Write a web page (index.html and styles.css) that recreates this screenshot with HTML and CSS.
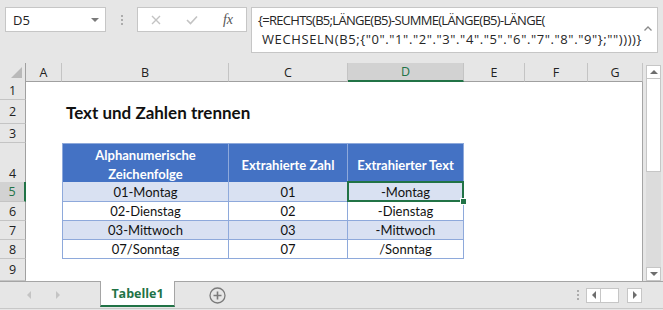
FILE: index.html
```html
<!DOCTYPE html>
<html>
<head>
    <title>Text und Zahlen trennen</title>
    <link rel="stylesheet" href="styles.css">
</head>
<body>
    <div class="ribbon">
        <div class="namebox"><span>D5</span><span class="drop"></span></div>
        <div class="grip"><i></i><i></i><i></i></div>
        <div class="fxbox">
            <span class="fxbtn">
                <svg width="10" height="10" viewBox="0 0 10 10"><path d="M1 1L9 9M9 1L1 9" stroke="#c3c3c3" stroke-width="1.4" fill="none"/></svg>
            </span>
            <span class="fxbtn">
                <svg width="12" height="10" viewBox="0 0 12 10"><path d="M1 5L4.5 8.5L11 1.5" stroke="#c3c3c3" stroke-width="1.6" fill="none"/></svg>
            </span>
            <span class="fxbtn fx">fx</span>
        </div>
        <div class="formula">
            <div class="ftext">
                <div class="line1">{=RECHTS(B5;LÄNGE(B5)-SUMME(LÄNGE(B5)-LÄNGE(</div>
                <div class="line2">WECHSELN(B5;{"0"."1"."2"."3"."4"."5"."6"."7"."8"."9"};""))))}</div>
            </div>
            <span class="collapse">
                <svg width="8" height="5" viewBox="0 0 8 5"><path d="M0.5 4.5L4 1L7.5 4.5" stroke="#8a8a8a" stroke-width="1.3" fill="none"/></svg>
            </span>
        </div>
    </div>

    <div class="main">
        <div class="sheet">
            <div class="row heads">
                <div class="corner"><span class="tri"></span></div>
                <div class="ch">A</div>
                <div class="ch">B</div>
                <div class="ch">C</div>
                <div class="ch active">D</div>
                <div class="ch">E</div>
                <div class="ch">F</div>
                <div class="ch">G</div>
            </div>
            <div class="row r1">
                <div class="rh">1</div><div></div><div></div><div></div><div></div><div></div><div></div><div></div>
            </div>
            <div class="row r2">
                <div class="rh">2</div><div></div><div class="title">Text und Zahlen trennen</div><div></div><div></div><div></div><div></div><div></div>
            </div>
            <div class="row r3">
                <div class="rh">3</div><div></div><div></div><div></div><div></div><div></div><div></div><div></div>
            </div>
            <div class="row r4">
                <div class="rh">4</div><div></div>
                <div class="t th first">Alphanumerische<br>Zeichenfolge</div>
                <div class="t th">Extrahierte Zahl</div>
                <div class="t th">Extrahierter Text</div>
                <div></div><div></div><div></div>
            </div>
            <div class="row r5">
                <div class="rh active">5</div><div></div>
                <div class="t band first">01-Montag</div>
                <div class="t band">01</div>
                <div class="t band sel">-Montag</div>
                <div></div><div></div><div></div>
            </div>
            <div class="row r6">
                <div class="rh">6</div><div></div>
                <div class="t first">02-Dienstag</div>
                <div class="t">02</div>
                <div class="t">-Dienstag</div>
                <div></div><div></div><div></div>
            </div>
            <div class="row r7">
                <div class="rh">7</div><div></div>
                <div class="t band first">03-Mittwoch</div>
                <div class="t band">03</div>
                <div class="t band">-Mittwoch</div>
                <div></div><div></div><div></div>
            </div>
            <div class="row r8">
                <div class="rh">8</div><div></div>
                <div class="t first">07/Sonntag</div>
                <div class="t">07</div>
                <div class="t">/Sonntag</div>
                <div></div><div></div><div></div>
            </div>
            <div class="row r9">
                <div class="rh">9</div><div></div><div></div><div></div><div></div><div></div><div></div><div></div>
            </div>
        </div>
        <div class="vscroll">
            <div class="sbtn"><span class="up"></span></div>
            <div class="vthumb"></div>
            <div class="vtrack"></div>
            <div class="sbtn"><span class="down"></span></div>
        </div>
    </div>

    <div class="tabbar">
        <div class="tabnav"><span class="left"></span><span class="right"></span></div>
        <div class="tab">Tabelle1</div>
        <div class="addsheet">
            <svg width="17" height="17" viewBox="0 0 17 17"><circle cx="8.5" cy="8.5" r="7.5" stroke="#7b7b7b" stroke-width="1.3" fill="none"/><path d="M8.5 4.5V12.5M4.5 8.5H12.5" stroke="#7b7b7b" stroke-width="1.6"/></svg>
        </div>
        <div class="spacer"></div>
        <div class="grip hgrip"><i></i><i></i><i></i></div>
        <div class="hscroll">
            <div class="sbtn"><span class="left dark"></span></div>
            <div class="hthumb"></div>
            <div class="htrack"></div>
            <div class="sbtn"><span class="right dark"></span></div>
        </div>
    </div>
</body>
</html>
```

FILE: styles.css
```css
body {
    margin: 0;
    width: 663px;
    height: 310px;
    overflow: hidden;
    background-color: #e6e6e6;
    font-family: 'Open Sans', sans-serif;
    color: #222;
}

/* formula bar */
.ribbon {
    display: flex;
    align-items: flex-start;
    height: 63px;
    padding: 7px 0 0 5px;
    box-sizing: border-box;
}
.namebox {
    width: 101px;
    height: 25px;
    box-sizing: border-box;
    border: 1px solid #c6c6c6;
    background-color: #fff;
    display: flex;
    align-items: center;
    justify-content: space-between;
    padding: 0 6px 0 7px;
    font-size: 13px;
}
.drop {
    border-left: 4px solid transparent;
    border-right: 4px solid transparent;
    border-top: 4px solid #7a7a7a;
}
.grip {
    width: 31px;
    display: flex;
    flex-direction: column;
    align-items: center;
    gap: 2px;
    padding-top: 8px;
}
.grip i {
    width: 2px;
    height: 2px;
    background-color: #acacac;
}
.fxbox {
    width: 110px;
    height: 25px;
    box-sizing: border-box;
    border: 1px solid #c6c6c6;
    background-color: #fff;
    display: flex;
    align-items: center;
    margin-right: 4px;
}
.fxbtn {
    width: 36px;
    display: flex;
    justify-content: center;
}
.fx {
    font-family: 'Liberation Serif', serif;
    font-style: italic;
    font-size: 14px;
    color: #555;
}
.formula {
    width: 407px;
    height: 46px;
    box-sizing: border-box;
    border: 1px solid #c6c6c6;
    background-color: #fff;
    display: flex;
    padding: 3px 5px 0 6px;
    font-size: 13px;
    line-height: 19px;
    color: #262626;
}
.ftext {
    flex: 1;
    white-space: nowrap;
}
.line1 {
    letter-spacing: -0.7px;
}
.line2 {
    padding-left: 4px;
    letter-spacing: 0.6px;
}
.collapse {
    padding-top: 6px;
}

/* sheet */
.main {
    display: flex;
}
.sheet {
    width: 643px;
}
.row {
    display: grid;
    grid-template-columns: 26px 36px 167px 119px 116px 61px 63px 1fr;
    background-color: #fff;
    border-right: 1px solid #a5a5a5;
    font-family: 'Lato', sans-serif;
    font-size: 13px;
}
.heads {
    height: 18px;
    background-color: #e6e6e6;
    border-right: none;
    font-family: 'Open Sans', sans-serif;
}
.r1, .r3, .r6, .r7, .r8 { height: 19px; }
.r2 { height: 24px; }
.r4 { height: 39px; }
.r5 { height: 20px; }
.r9 { height: 22px; }

.corner, .ch {
    border-right: 1px solid #c4c4c4;
    border-bottom: 1px solid #a0a0a0;
    box-sizing: border-box;
}
.corner {
    display: flex;
    justify-content: flex-end;
    align-items: flex-end;
    padding: 0 3px 3px 0;
    border-right-color: #a0a0a0;
}
.tri {
    border-left: 11px solid transparent;
    border-bottom: 11px solid #b9b9b9;
}
.ch {
    display: flex;
    align-items: center;
    justify-content: center;
    font-size: 12.5px;
}
.ch.active {
    background-color: #d2d2d2;
    border-bottom: 2px solid #217346;
    color: #217346;
}
.rh {
    background-color: #e6e6e6;
    border-right: 1px solid #a0a0a0;
    border-bottom: 1px solid #c4c4c4;
    box-sizing: border-box;
    display: flex;
    align-items: center;
    justify-content: center;
    font-family: 'Open Sans', sans-serif;
    font-size: 12.5px;
}
.r4 .rh {
    align-items: flex-end;
    padding-bottom: 2px;
}
.rh.active {
    background-color: #d2d2d2;
    border-right: 2px solid #217346;
    color: #217346;
}

.title {
    white-space: nowrap;
    font-weight: 700;
    font-size: 17px;
    padding: 2px 0 0 4px;
    color: #111;
}

/* table */
.t {
    box-sizing: border-box;
    border-right: 1px solid #8ea9db;
    border-bottom: 1px solid #8ea9db;
    display: flex;
    align-items: center;
    justify-content: center;
    text-align: center;
    color: #111;
}
.t.first {
    border-left: 1px solid #8ea9db;
}
.th {
    background-color: #4472c4;
    border-top: 1px solid #8ea9db;
    color: #fff;
    font-weight: 700;
    line-height: 19px;
    padding-top: 2px;
}
.band {
    background-color: #d9e1f2;
}
.sel {
    position: relative;
}
.sel::before {
    content: "";
    position: absolute;
    left: -1px;
    top: -1px;
    right: -1px;
    bottom: -1px;
    border: 2px solid #217346;
}
.sel::after {
    content: "";
    position: absolute;
    right: -3px;
    bottom: -3px;
    width: 5px;
    height: 5px;
    background-color: #217346;
    outline: 1px solid #fff;
}

/* scroll bars */
.vscroll {
    width: 15px;
    margin-left: 3px;
    padding-top: 2px;
    display: flex;
    flex-direction: column;
}
.sbtn {
    width: 15px;
    height: 14px;
    box-sizing: border-box;
    border: 1px solid #c6c6c6;
    background-color: #fff;
    display: flex;
    align-items: center;
    justify-content: center;
}
.vthumb {
    height: 93px;
    box-sizing: border-box;
    border: 1px solid #c6c6c6;
    border-top: none;
    background-color: #fff;
}
.vtrack {
    height: 95px;
    background-color: #dcdcdc;
}
.up {
    border-left: 4px solid transparent;
    border-right: 4px solid transparent;
    border-bottom: 4px solid #6e6e6e;
}
.down {
    border-left: 4px solid transparent;
    border-right: 4px solid transparent;
    border-top: 4px solid #6e6e6e;
}

/* sheet tabs */
.tabbar {
    display: flex;
    height: 28px;
    box-sizing: border-box;
    border-top: 1px solid #a5a5a5;
    border-bottom: 1px solid #c8c8c8;
}
.tabnav {
    width: 100px;
    display: flex;
    align-items: center;
    gap: 25px;
    padding-left: 27px;
    box-sizing: border-box;
}
.left {
    border-top: 4px solid transparent;
    border-bottom: 4px solid transparent;
    border-right: 4px solid #c4c4c4;
}
.right {
    border-top: 4px solid transparent;
    border-bottom: 4px solid transparent;
    border-left: 4px solid #c4c4c4;
}
.left.dark { border-right-color: #6e6e6e; }
.right.dark { border-left-color: #6e6e6e; }
.tab {
    width: 75px;
    box-sizing: border-box;
    background-color: #fff;
    border-left: 1px solid #a5a5a5;
    border-right: 1px solid #a5a5a5;
    border-bottom: 2px solid #217346;
    margin-top: -1px;
    margin-bottom: 1px;
    display: flex;
    align-items: center;
    justify-content: center;
    font-weight: 700;
    font-size: 12.5px;
    color: #217346;
}
.addsheet {
    margin-left: 34px;
    display: flex;
    align-items: center;
}
.spacer {
    flex: 1;
}
.hgrip {
    width: 16px;
    padding-top: 8px;
}
.hscroll {
    display: flex;
    align-items: center;
    margin-right: 21px;
}
.hscroll .sbtn {
    height: 15px;
}
.hthumb {
    width: 18px;
    height: 15px;
    box-sizing: border-box;
    border: 1px solid #c6c6c6;
    border-left: none;
    background-color: #fff;
}
.htrack {
    width: 8px;
}
```
